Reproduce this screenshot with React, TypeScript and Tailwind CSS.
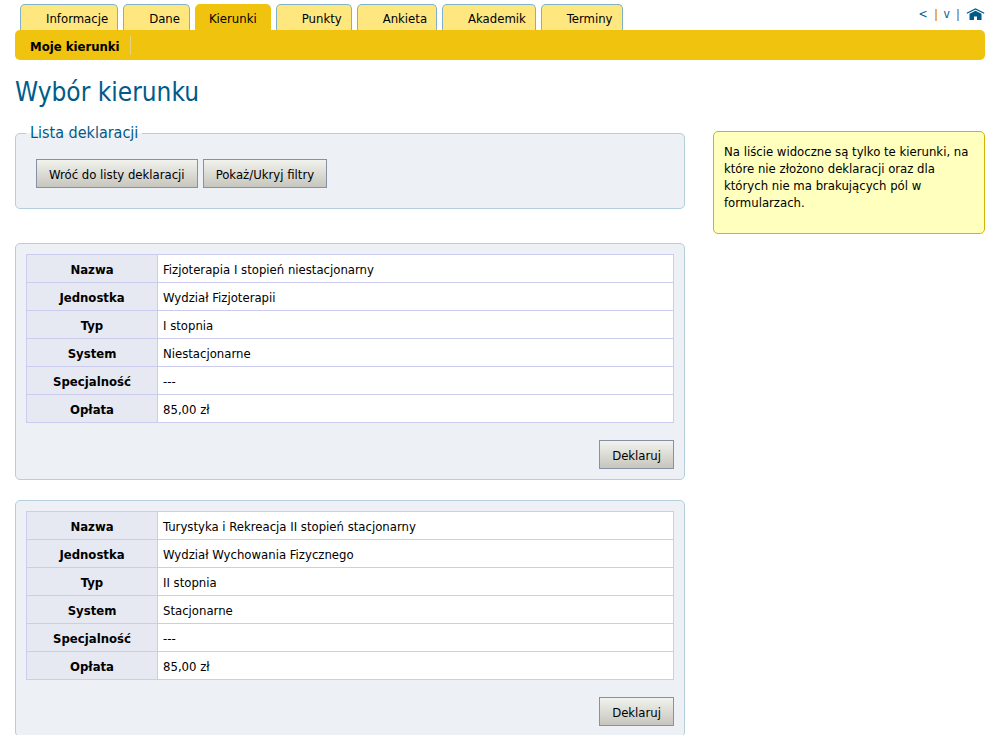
const tabs = [
  { id: 'informacje', label: 'Informacje' },
  { id: 'dane', label: 'Dane' },
  { id: 'kierunki', label: 'Kierunki' },
  { id: 'punkty', label: 'Punkty' },
  { id: 'ankieta', label: 'Ankieta' },
  { id: 'akademik', label: 'Akademik' },
  { id: 'terminy', label: 'Terminy' },
];

interface Course {
  name: string;
  unit: string;
  type: string;
  system: string;
  specialty: string;
  fee: string;
}

const courses: Course[] = [
  {
    name: 'Fizjoterapia I stopień niestacjonarny',
    unit: 'Wydział Fizjoterapii',
    type: 'I stopnia',
    system: 'Niestacjonarne',
    specialty: '---',
    fee: '85,00 zł',
  },
  {
    name: 'Turystyka i Rekreacja II stopień stacjonarny',
    unit: 'Wydział Wychowania Fizycznego',
    type: 'II stopnia',
    system: 'Stacjonarne',
    specialty: '---',
    fee: '85,00 zł',
  },
];

function Button({ children }: { children: string }) {
  return (
    <button
      type="button"
      className="h-[29px] px-3 pt-px border border-[#8790a5] bg-linear-to-b from-[#f3f3ee] to-[#c6c6be] text-black whitespace-nowrap"
    >
      {children}
    </button>
  );
}

function CourseCard({ course }: { course: Course }) {
  const rows = [
    ['Nazwa', course.name],
    ['Jednostka', course.unit],
    ['Typ', course.type],
    ['System', course.system],
    ['Specjalność', course.specialty],
    ['Opłata', course.fee],
  ];

  return (
    <section className="rounded-[5px] border border-[#b3cfde] bg-[#edf0f5] p-2.5">
      <table className="w-full border-collapse">
        <tbody>
          {rows.map(([label, value]) => (
            <tr key={label} className="h-7">
              <th scope="row" className="w-[131px] border border-[#ccccee] bg-[#e6e9f1] pt-px font-bold">
                {label}
              </th>
              <td className="border border-[#ccccee] bg-white px-[5px] pt-px">{value}</td>
            </tr>
          ))}
        </tbody>
      </table>
      <div className="mt-[17px] flex justify-end">
        <Button>Deklaruj</Button>
      </div>
    </section>
  );
}

export default function App() {
  return (
    <div className="bg-white pt-1 pr-[22px] pl-[15px] font-['DejaVu_Sans_Condensed','DejaVu_Sans',sans-serif] text-[13px] leading-[17px] text-black">
      {/* Navigation */}
      <header>
        <div className="flex items-start justify-between">
          <nav className="flex gap-[5px] pl-[5px]">
            {tabs.map((tab) => (
              <a
                key={tab.id}
                href={`#${tab.id}`}
                className={`h-[26px] rounded-t-[5px] border border-b-0 pt-[5px] ${
                  tab.id === 'kierunki'
                    ? 'border-[#f0c30f] bg-[#f0c30f] px-[13px]'
                    : 'border-[#7fb2c8] bg-[#ffe780] pr-[9px] pl-[25px]'
                }`}
              >
                {tab.label}
              </a>
            ))}
          </nav>
          <div className="flex items-center gap-[7px] pt-[2px] text-[12px] text-[#005b8a]">
            <a href="#wstecz">&lt;</a>
            <span className="h-3 w-0.5 bg-[#e8ac78]" />
            <a href="#dol">v</a>
            <span className="h-3 w-0.5 bg-[#80b4e0]" />
            <a href="#start" aria-label="Strona główna">
              <svg width="19" height="13" viewBox="0 0 19 13" fill="none">
                <path d="M0.8 5.2 9.5 1 18.2 5.2" stroke="#005b8a" strokeWidth="1.2" />
                <path d="M3.5 5.8 9.5 2.8 15.5 5.8V12H11V8.6H8V12H3.5Z" fill="#005b8a" />
              </svg>
            </a>
          </div>
        </div>
        <div className="flex h-[30px] items-center rounded-[5px] bg-[#f0c30f]">
          <a href="#moje-kierunki" className="border-r border-[#e6d27a] pt-0.5 pr-2.5 pl-[15px] font-bold">
            Moje kierunki
          </a>
        </div>
      </header>

      <h1 className="mt-4 text-[26px] leading-[32px] text-[#005b8a]">Wybór kierunku</h1>

      <div className="mt-4 flex items-start gap-7">
        <main className="min-w-0 flex-1">
          <fieldset className="rounded-[5px] border border-[#b3cfde] bg-[#edf0f5] px-5 pt-[17px] pb-5">
            <legend className="-ml-2.5 px-1 text-[16px] leading-[18px] text-[#005b8a]">Lista deklaracji</legend>
            <div className="flex gap-[5px]">
              <Button>Wróć do listy deklaracji</Button>
              <Button>Pokaż/Ukryj filtry</Button>
            </div>
          </fieldset>

          <div className="mt-[34px] flex flex-col gap-5">
            {courses.map((course) => (
              <CourseCard key={course.name} course={course} />
            ))}
          </div>
        </main>

        {/* Hint */}
        <aside className="mt-[7px] w-[272px] shrink-0 rounded-[5px] border border-[#d4b40a] bg-[#ffffbe] px-2.5 pt-[11px] pb-[22px]">
          <p>
            Na liście widoczne są tylko te kierunki, na które nie złożono deklaracji oraz dla których nie ma
            brakujących pól w formularzach.
          </p>
        </aside>
      </div>
    </div>
  );
}
